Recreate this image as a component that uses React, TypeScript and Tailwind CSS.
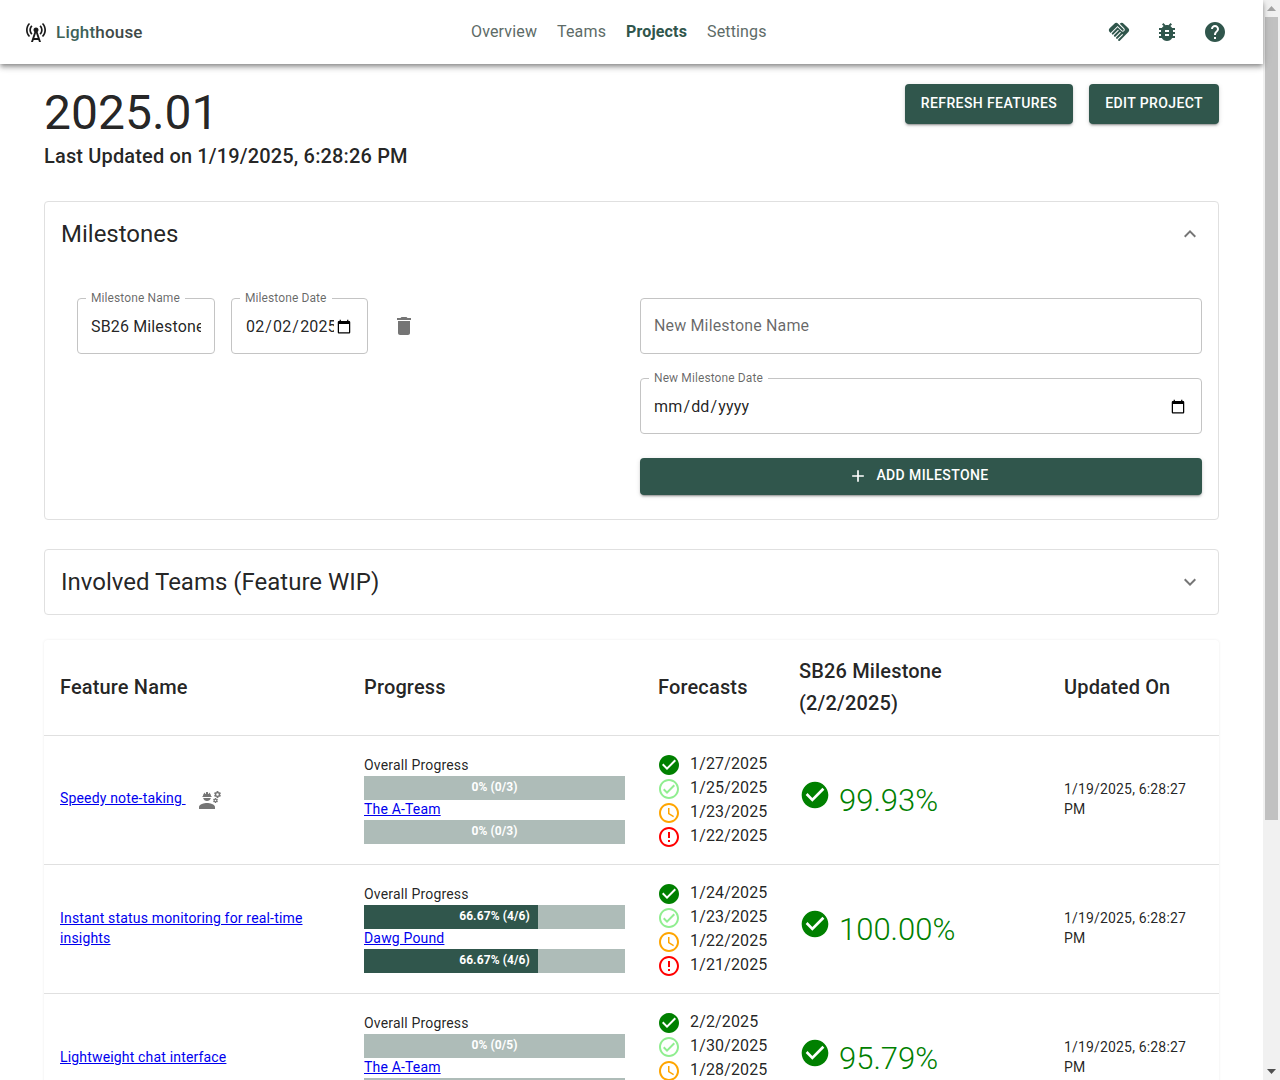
import React from "react";
import {
  MdAdd, MdBugReport, MdCellTower, MdCheckCircle, MdDelete, MdEngineering, MdErrorOutline,
  MdExpandLess, MdExpandMore, MdHandshake, MdHelp, MdOutlineAccessTime, MdOutlineCheckCircle,
} from "react-icons/md";

const btnShadow = "shadow-[0_3px_1px_-2px_rgba(0,0,0,0.2),0_2px_2px_0_rgba(0,0,0,0.14),0_1px_5px_0_rgba(0,0,0,0.12)]";

function Field({ label, className, children }: { label?: string; className: string; children: React.ReactNode }) {
  return (
    <div className={`relative h-14 rounded border border-[#c4c4c4] ${className}`}>
      {label && (
        <span className="absolute -top-[9px] left-[8px] bg-white px-[5px] text-xs leading-[16px] tracking-[0.1px] text-[#00000099]">
          {label}
        </span>
      )}
      {children}
    </div>
  );
}

const inputCls = "h-full w-full bg-transparent pr-[13px] text-base tracking-[0.15px] text-[#000000de] outline-none placeholder:text-[#00000099] placeholder:opacity-100";

function Bar({ pct, label }: { pct: number; label: string }) {
  return (
    <div className="relative h-6 w-full bg-[#aebcb8]">
      <div className="h-full bg-[#30564c]" style={{ width: `${pct}%` }} />
      <div className="absolute inset-0 flex items-center justify-center pb-[2px] text-xs font-bold tracking-[0.1px] text-white">{label}</div>
    </div>
  );
}

function Forecasts({ dates }: { dates: string[] }) {
  const icons = [
    <MdCheckCircle size={24} className="text-[#008000]" />,
    <MdOutlineCheckCircle size={24} className="text-[#90ee90]" />,
    <MdOutlineAccessTime size={24} className="text-[#ffa500]" />,
    <MdErrorOutline size={24} className="text-[#ff0000]" />,
  ];
  return (
    <div className="-ml-px flex flex-col">
      {dates.map((d, i) => (
        <div key={i} className="flex h-6 items-center gap-[9px] text-base tracking-[0.15px] text-[#000000de]">
          {icons[i]}
          <span className="mb-[2px]">{d}</span>
        </div>
      ))}
    </div>
  );
}

function Row({ feature, engineer, overall, team, teamBar, dates, pct }: {
  feature: string; engineer?: boolean; overall: [number, string]; team: string; teamBar: [number, string]; dates: string[]; pct: string;
}) {
  return (
    <tr className="border-b border-[#e0e0e0]">
      <td className="p-4 pr-[30px] align-middle text-sm leading-5 tracking-[0.17px]">
        <div className="flex items-center">
          <span className={engineer ? "mb-1" : "mb-[3px]"}>
            <a href="#" className="text-[#0000ee] underline">{feature}{engineer ? "\u00a0" : ""}</a>
          </span>
          {engineer && <MdEngineering size={24} className="ml-[12px] text-[#757575]" />}
        </div>
      </td>
      <td className="py-4 pl-4 pr-[17px] align-middle text-sm tracking-[0.17px] text-[#000000de]">
        <div className="pb-[2px] leading-[18px]">Overall Progress</div>
        <Bar pct={overall[0]} label={overall[1]} />
        <a href="#" className="block pb-[2px] leading-[18px] text-[#0000ee] underline">{team}</a>
        <Bar pct={teamBar[0]} label={teamBar[1]} />
      </td>
      <td className="pl-4 pt-[17px] pb-[15px] align-middle">
        <Forecasts dates={dates} />
      </td>
      <td className="px-4 pt-[17px] pb-[15px] align-middle">
        <div className="flex items-center gap-2">
          <MdCheckCircle size={32} className="-mt-3 text-[#008000]" />
          <span className="text-[31px] font-light leading-[40px] text-[#008000]">{pct}</span>
        </div>
      </td>
      <td className="pl-4 pr-[30px] pt-[15px] pb-[17px] align-middle text-sm leading-5 tracking-[0.17px] text-[#000000de]">1/19/2025, 6:28:27 PM</td>
    </tr>
  );
}

function Scrollbar() {
  return (
    <div className="flex h-full w-[17px] shrink-0 flex-col bg-[#f1f1f1]">
      <div className="flex h-[17px] items-center justify-center">
        <svg width="9" height="5" viewBox="0 0 9 5"><path d="M4.5 0L9 5H0z" fill="#a3a3a3" /></svg>
      </div>
      <div className="flex-1">
        <div className="mx-[2px] h-[803px] bg-[#c1c1c1]" />
      </div>
      <div className="flex h-[17px] items-center justify-center">
        <svg width="9" height="5" viewBox="0 0 9 5"><path d="M4.5 5L9 0H0z" fill="#505050" /></svg>
      </div>
    </div>
  );
}

export default function App() {
  return (
    <div className="flex h-screen overflow-hidden bg-white font-['Roboto',sans-serif] text-[#000000de]">
      <div className="min-w-0 flex-1">
        <header className="relative z-10 flex h-16 items-center bg-white pl-[24px] pr-[36px] shadow-[0_2px_4px_-1px_rgba(0,0,0,0.3),0_4px_5px_0_rgba(0,0,0,0.2),0_1px_10px_0_rgba(0,0,0,0.12)]">
          <div className="flex w-[447px] items-center gap-[8px]">
            <MdCellTower size={24} className="text-[#1a1a1a]" />
            <span className="text-[17px] font-medium leading-6 tracking-[0.2px] text-[#3d6258]">
              Light<span className="text-[#3f4a47]">house</span>
            </span>
          </div>
          <nav className="flex items-center gap-5 text-base tracking-[0.15px] text-[#5d6b67]">
            <span>Overview</span>
            <span>Teams</span>
            <span className="font-bold text-[#30564c]">Projects</span>
            <span>Settings</span>
          </nav>
          <div className="ml-auto flex items-center gap-6 text-[#30564c]">
            <MdHandshake size={24} />
            <MdBugReport size={24} />
            <MdHelp size={24} />
          </div>
        </header>

        <main className="px-[44px] pt-5">
          <div className="flex items-start justify-between">
            <div>
              <h1 className="mt-[1px] text-[48px] font-normal leading-[56px]">2025.01</h1>
              <p className="text-[20px] font-medium leading-[30px] tracking-[0.15px]">Last Updated on 1/19/2025, 6:28:26 PM</p>
            </div>
            <div className="flex gap-4">
              <button className={`h-10 rounded bg-[#30564c] px-4 pb-[2px] text-sm font-medium uppercase tracking-[0.4px] text-white ${btnShadow}`}>Refresh Features</button>
              <button className={`h-10 rounded bg-[#30564c] px-4 pb-[2px] text-sm font-medium uppercase tracking-[0.4px] text-white ${btnShadow}`}>Edit Project</button>
            </div>
          </div>

          <section className="mt-[30px] rounded border border-[#e0e0e0]">
            <div className="flex h-[64px] items-center justify-between pl-4 pr-[16px]">
              <h2 className="text-2xl font-normal">Milestones</h2>
              <MdExpandLess size={24} className="text-[#0000008a]" />
            </div>
            <div className="flex pr-4 pb-6 pt-8">
              <div className="flex w-[595px] shrink-0 items-start gap-4 pl-8">
                <Field label="Milestone Name" className="w-[138px]">
                  <input className={`${inputCls} pl-[13px]`} defaultValue="SB26 Milestone" />
                </Field>
                <Field label="Milestone Date" className="w-[137px]">
                  <input type="date" className={`${inputCls} pl-[13px] pt-[1px]`} defaultValue="2025-02-02" />
                </Field>
                <MdDelete size={24} className="mt-4 ml-[8px] text-[#757575]" />
              </div>
              <div className="flex flex-1 flex-col gap-6">
                <Field className="w-full">
                  <input className={`${inputCls} pl-[13px] pb-[2px]`} placeholder="New Milestone Name" />
                </Field>
                <Field label="New Milestone Date" className="w-full">
                  <input type="date" className={`${inputCls} pl-[12px] pt-[1px]`} />
                </Field>
                <button className={`flex h-[37px] items-center justify-center gap-2 rounded bg-[#30564c] pb-[3px] pr-[5px] text-sm font-medium uppercase tracking-[0.4px] text-white ${btnShadow}`}>
                  <MdAdd size={20} className="mt-[2px]" />
                  Add Milestone
                </button>
              </div>
            </div>
          </section>

          <section className="mt-[29px] flex h-[66px] items-center justify-between rounded border border-[#e0e0e0] pl-4 pr-4">
            <h2 className="text-2xl font-normal">Involved Teams (Feature WIP)</h2>
            <MdExpandMore size={24} className="text-[#0000008a]" />
          </section>

          <div className="mt-[25px] rounded bg-white shadow-[0_0_3px_rgba(0,0,0,0.08)]">
            <table className="w-full table-fixed border-collapse text-left">
              <colgroup>
                <col className="w-[304px]" />
                <col className="w-[294px]" />
                <col className="w-[141px]" />
                <col className="w-[265px]" />
                <col className="w-[171px]" />
              </colgroup>
              <thead>
                <tr className="border-b border-[#e0e0e0] text-[20px] leading-[32px] tracking-[0.15px]">
                  <th className="px-4 pt-[15px] pb-[16px] font-medium">Feature Name</th>
                  <th className="px-4 pt-[15px] pb-[16px] font-medium">Progress</th>
                  <th className="pl-4 pt-[15px] pb-[16px] font-medium">Forecasts</th>
                  <th className="pl-4 pr-[60px] pt-[15px] pb-[16px] font-medium">SB26 Milestone (2/2/2025)</th>
                  <th className="px-4 pt-[15px] pb-[16px] font-medium">Updated On</th>
                </tr>
              </thead>
              <tbody>
                <Row feature="Speedy note-taking" engineer overall={[0, "0% (0/3)"]} team="The A-Team" teamBar={[0, "0% (0/3)"]}
                  dates={["1/27/2025", "1/25/2025", "1/23/2025", "1/22/2025"]} pct="99.93%" />
                <Row feature="Instant status monitoring for real-time insights" overall={[66.67, "66.67% (4/6)"]} team="Dawg Pound" teamBar={[66.67, "66.67% (4/6)"]}
                  dates={["1/24/2025", "1/23/2025", "1/22/2025", "1/21/2025"]} pct="100.00%" />
                <Row feature="Lightweight chat interface" overall={[0, "0% (0/5)"]} team="The A-Team" teamBar={[0, "0% (0/5)"]}
                  dates={["2/2/2025", "1/30/2025", "1/28/2025", "1/27/2025"]} pct="95.79%" />
              </tbody>
            </table>
          </div>
        </main>
      </div>
      <Scrollbar />
    </div>
  );
}
